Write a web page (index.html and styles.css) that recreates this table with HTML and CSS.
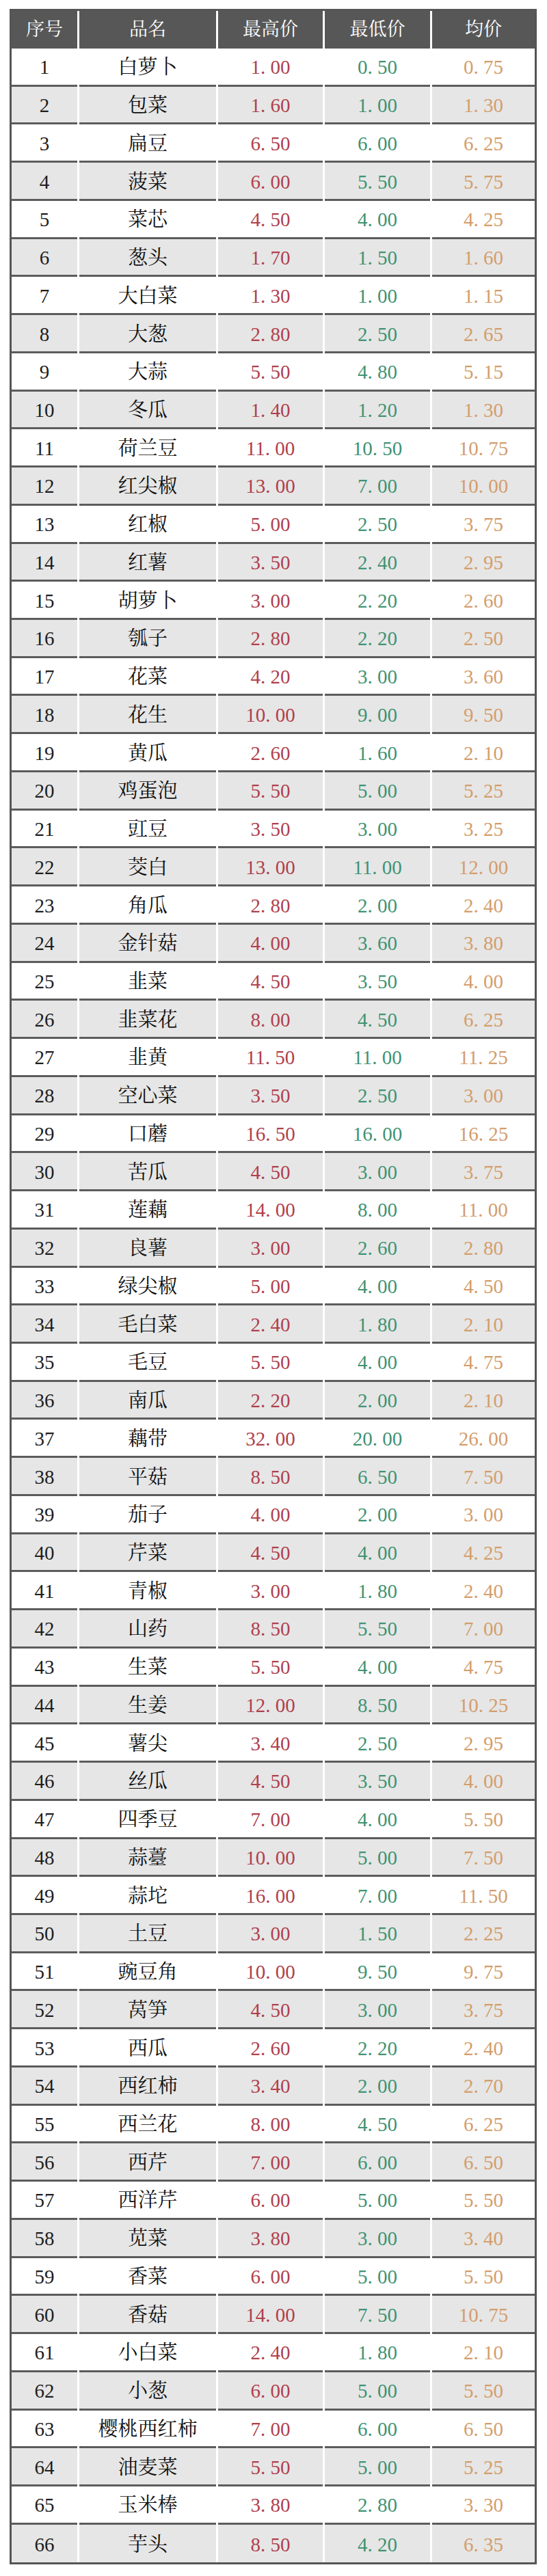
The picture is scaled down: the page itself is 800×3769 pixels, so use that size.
FILE: index.html
```html
<!DOCTYPE html>
<html lang="zh-CN">
<head>
<meta charset="utf-8">
<title>蔬菜价格表</title>
<link rel="stylesheet" href="styles.css">
</head>
<body>
<div class="table">
  <div class="row head"><div class="c">序号</div><div class="c">品名</div><div class="c">最高价</div><div class="c">最低价</div><div class="c">均价</div></div>
  <div class="row"><div class="c">1</div><div class="c nm">白萝卜</div><div class="c hi">1<span class="p">.</span>00</div><div class="c lo">0<span class="p">.</span>50</div><div class="c av">0<span class="p">.</span>75</div></div>
  <div class="row"><div class="c">2</div><div class="c nm">包菜</div><div class="c hi">1<span class="p">.</span>60</div><div class="c lo">1<span class="p">.</span>00</div><div class="c av">1<span class="p">.</span>30</div></div>
  <div class="row"><div class="c">3</div><div class="c nm">扁豆</div><div class="c hi">6<span class="p">.</span>50</div><div class="c lo">6<span class="p">.</span>00</div><div class="c av">6<span class="p">.</span>25</div></div>
  <div class="row"><div class="c">4</div><div class="c nm">菠菜</div><div class="c hi">6<span class="p">.</span>00</div><div class="c lo">5<span class="p">.</span>50</div><div class="c av">5<span class="p">.</span>75</div></div>
  <div class="row"><div class="c">5</div><div class="c nm">菜芯</div><div class="c hi">4<span class="p">.</span>50</div><div class="c lo">4<span class="p">.</span>00</div><div class="c av">4<span class="p">.</span>25</div></div>
  <div class="row"><div class="c">6</div><div class="c nm">葱头</div><div class="c hi">1<span class="p">.</span>70</div><div class="c lo">1<span class="p">.</span>50</div><div class="c av">1<span class="p">.</span>60</div></div>
  <div class="row"><div class="c">7</div><div class="c nm">大白菜</div><div class="c hi">1<span class="p">.</span>30</div><div class="c lo">1<span class="p">.</span>00</div><div class="c av">1<span class="p">.</span>15</div></div>
  <div class="row"><div class="c">8</div><div class="c nm">大葱</div><div class="c hi">2<span class="p">.</span>80</div><div class="c lo">2<span class="p">.</span>50</div><div class="c av">2<span class="p">.</span>65</div></div>
  <div class="row"><div class="c">9</div><div class="c nm">大蒜</div><div class="c hi">5<span class="p">.</span>50</div><div class="c lo">4<span class="p">.</span>80</div><div class="c av">5<span class="p">.</span>15</div></div>
  <div class="row"><div class="c">10</div><div class="c nm">冬瓜</div><div class="c hi">1<span class="p">.</span>40</div><div class="c lo">1<span class="p">.</span>20</div><div class="c av">1<span class="p">.</span>30</div></div>
  <div class="row"><div class="c">11</div><div class="c nm">荷兰豆</div><div class="c hi">11<span class="p">.</span>00</div><div class="c lo">10<span class="p">.</span>50</div><div class="c av">10<span class="p">.</span>75</div></div>
  <div class="row"><div class="c">12</div><div class="c nm">红尖椒</div><div class="c hi">13<span class="p">.</span>00</div><div class="c lo">7<span class="p">.</span>00</div><div class="c av">10<span class="p">.</span>00</div></div>
  <div class="row"><div class="c">13</div><div class="c nm">红椒</div><div class="c hi">5<span class="p">.</span>00</div><div class="c lo">2<span class="p">.</span>50</div><div class="c av">3<span class="p">.</span>75</div></div>
  <div class="row"><div class="c">14</div><div class="c nm">红薯</div><div class="c hi">3<span class="p">.</span>50</div><div class="c lo">2<span class="p">.</span>40</div><div class="c av">2<span class="p">.</span>95</div></div>
  <div class="row"><div class="c">15</div><div class="c nm">胡萝卜</div><div class="c hi">3<span class="p">.</span>00</div><div class="c lo">2<span class="p">.</span>20</div><div class="c av">2<span class="p">.</span>60</div></div>
  <div class="row"><div class="c">16</div><div class="c nm">瓠子</div><div class="c hi">2<span class="p">.</span>80</div><div class="c lo">2<span class="p">.</span>20</div><div class="c av">2<span class="p">.</span>50</div></div>
  <div class="row"><div class="c">17</div><div class="c nm">花菜</div><div class="c hi">4<span class="p">.</span>20</div><div class="c lo">3<span class="p">.</span>00</div><div class="c av">3<span class="p">.</span>60</div></div>
  <div class="row"><div class="c">18</div><div class="c nm">花生</div><div class="c hi">10<span class="p">.</span>00</div><div class="c lo">9<span class="p">.</span>00</div><div class="c av">9<span class="p">.</span>50</div></div>
  <div class="row"><div class="c">19</div><div class="c nm">黄瓜</div><div class="c hi">2<span class="p">.</span>60</div><div class="c lo">1<span class="p">.</span>60</div><div class="c av">2<span class="p">.</span>10</div></div>
  <div class="row"><div class="c">20</div><div class="c nm">鸡蛋泡</div><div class="c hi">5<span class="p">.</span>50</div><div class="c lo">5<span class="p">.</span>00</div><div class="c av">5<span class="p">.</span>25</div></div>
  <div class="row"><div class="c">21</div><div class="c nm">豇豆</div><div class="c hi">3<span class="p">.</span>50</div><div class="c lo">3<span class="p">.</span>00</div><div class="c av">3<span class="p">.</span>25</div></div>
  <div class="row"><div class="c">22</div><div class="c nm">茭白</div><div class="c hi">13<span class="p">.</span>00</div><div class="c lo">11<span class="p">.</span>00</div><div class="c av">12<span class="p">.</span>00</div></div>
  <div class="row"><div class="c">23</div><div class="c nm">角瓜</div><div class="c hi">2<span class="p">.</span>80</div><div class="c lo">2<span class="p">.</span>00</div><div class="c av">2<span class="p">.</span>40</div></div>
  <div class="row"><div class="c">24</div><div class="c nm">金针菇</div><div class="c hi">4<span class="p">.</span>00</div><div class="c lo">3<span class="p">.</span>60</div><div class="c av">3<span class="p">.</span>80</div></div>
  <div class="row"><div class="c">25</div><div class="c nm">韭菜</div><div class="c hi">4<span class="p">.</span>50</div><div class="c lo">3<span class="p">.</span>50</div><div class="c av">4<span class="p">.</span>00</div></div>
  <div class="row"><div class="c">26</div><div class="c nm">韭菜花</div><div class="c hi">8<span class="p">.</span>00</div><div class="c lo">4<span class="p">.</span>50</div><div class="c av">6<span class="p">.</span>25</div></div>
  <div class="row"><div class="c">27</div><div class="c nm">韭黄</div><div class="c hi">11<span class="p">.</span>50</div><div class="c lo">11<span class="p">.</span>00</div><div class="c av">11<span class="p">.</span>25</div></div>
  <div class="row"><div class="c">28</div><div class="c nm">空心菜</div><div class="c hi">3<span class="p">.</span>50</div><div class="c lo">2<span class="p">.</span>50</div><div class="c av">3<span class="p">.</span>00</div></div>
  <div class="row"><div class="c">29</div><div class="c nm">口蘑</div><div class="c hi">16<span class="p">.</span>50</div><div class="c lo">16<span class="p">.</span>00</div><div class="c av">16<span class="p">.</span>25</div></div>
  <div class="row"><div class="c">30</div><div class="c nm">苦瓜</div><div class="c hi">4<span class="p">.</span>50</div><div class="c lo">3<span class="p">.</span>00</div><div class="c av">3<span class="p">.</span>75</div></div>
  <div class="row"><div class="c">31</div><div class="c nm">莲藕</div><div class="c hi">14<span class="p">.</span>00</div><div class="c lo">8<span class="p">.</span>00</div><div class="c av">11<span class="p">.</span>00</div></div>
  <div class="row"><div class="c">32</div><div class="c nm">良薯</div><div class="c hi">3<span class="p">.</span>00</div><div class="c lo">2<span class="p">.</span>60</div><div class="c av">2<span class="p">.</span>80</div></div>
  <div class="row"><div class="c">33</div><div class="c nm">绿尖椒</div><div class="c hi">5<span class="p">.</span>00</div><div class="c lo">4<span class="p">.</span>00</div><div class="c av">4<span class="p">.</span>50</div></div>
  <div class="row"><div class="c">34</div><div class="c nm">毛白菜</div><div class="c hi">2<span class="p">.</span>40</div><div class="c lo">1<span class="p">.</span>80</div><div class="c av">2<span class="p">.</span>10</div></div>
  <div class="row"><div class="c">35</div><div class="c nm">毛豆</div><div class="c hi">5<span class="p">.</span>50</div><div class="c lo">4<span class="p">.</span>00</div><div class="c av">4<span class="p">.</span>75</div></div>
  <div class="row"><div class="c">36</div><div class="c nm">南瓜</div><div class="c hi">2<span class="p">.</span>20</div><div class="c lo">2<span class="p">.</span>00</div><div class="c av">2<span class="p">.</span>10</div></div>
  <div class="row"><div class="c">37</div><div class="c nm">藕带</div><div class="c hi">32<span class="p">.</span>00</div><div class="c lo">20<span class="p">.</span>00</div><div class="c av">26<span class="p">.</span>00</div></div>
  <div class="row"><div class="c">38</div><div class="c nm">平菇</div><div class="c hi">8<span class="p">.</span>50</div><div class="c lo">6<span class="p">.</span>50</div><div class="c av">7<span class="p">.</span>50</div></div>
  <div class="row"><div class="c">39</div><div class="c nm">茄子</div><div class="c hi">4<span class="p">.</span>00</div><div class="c lo">2<span class="p">.</span>00</div><div class="c av">3<span class="p">.</span>00</div></div>
  <div class="row"><div class="c">40</div><div class="c nm">芹菜</div><div class="c hi">4<span class="p">.</span>50</div><div class="c lo">4<span class="p">.</span>00</div><div class="c av">4<span class="p">.</span>25</div></div>
  <div class="row"><div class="c">41</div><div class="c nm">青椒</div><div class="c hi">3<span class="p">.</span>00</div><div class="c lo">1<span class="p">.</span>80</div><div class="c av">2<span class="p">.</span>40</div></div>
  <div class="row"><div class="c">42</div><div class="c nm">山药</div><div class="c hi">8<span class="p">.</span>50</div><div class="c lo">5<span class="p">.</span>50</div><div class="c av">7<span class="p">.</span>00</div></div>
  <div class="row"><div class="c">43</div><div class="c nm">生菜</div><div class="c hi">5<span class="p">.</span>50</div><div class="c lo">4<span class="p">.</span>00</div><div class="c av">4<span class="p">.</span>75</div></div>
  <div class="row"><div class="c">44</div><div class="c nm">生姜</div><div class="c hi">12<span class="p">.</span>00</div><div class="c lo">8<span class="p">.</span>50</div><div class="c av">10<span class="p">.</span>25</div></div>
  <div class="row"><div class="c">45</div><div class="c nm">薯尖</div><div class="c hi">3<span class="p">.</span>40</div><div class="c lo">2<span class="p">.</span>50</div><div class="c av">2<span class="p">.</span>95</div></div>
  <div class="row"><div class="c">46</div><div class="c nm">丝瓜</div><div class="c hi">4<span class="p">.</span>50</div><div class="c lo">3<span class="p">.</span>50</div><div class="c av">4<span class="p">.</span>00</div></div>
  <div class="row"><div class="c">47</div><div class="c nm">四季豆</div><div class="c hi">7<span class="p">.</span>00</div><div class="c lo">4<span class="p">.</span>00</div><div class="c av">5<span class="p">.</span>50</div></div>
  <div class="row"><div class="c">48</div><div class="c nm">蒜薹</div><div class="c hi">10<span class="p">.</span>00</div><div class="c lo">5<span class="p">.</span>00</div><div class="c av">7<span class="p">.</span>50</div></div>
  <div class="row"><div class="c">49</div><div class="c nm">蒜坨</div><div class="c hi">16<span class="p">.</span>00</div><div class="c lo">7<span class="p">.</span>00</div><div class="c av">11<span class="p">.</span>50</div></div>
  <div class="row"><div class="c">50</div><div class="c nm">土豆</div><div class="c hi">3<span class="p">.</span>00</div><div class="c lo">1<span class="p">.</span>50</div><div class="c av">2<span class="p">.</span>25</div></div>
  <div class="row"><div class="c">51</div><div class="c nm">豌豆角</div><div class="c hi">10<span class="p">.</span>00</div><div class="c lo">9<span class="p">.</span>50</div><div class="c av">9<span class="p">.</span>75</div></div>
  <div class="row"><div class="c">52</div><div class="c nm">莴笋</div><div class="c hi">4<span class="p">.</span>50</div><div class="c lo">3<span class="p">.</span>00</div><div class="c av">3<span class="p">.</span>75</div></div>
  <div class="row"><div class="c">53</div><div class="c nm">西瓜</div><div class="c hi">2<span class="p">.</span>60</div><div class="c lo">2<span class="p">.</span>20</div><div class="c av">2<span class="p">.</span>40</div></div>
  <div class="row"><div class="c">54</div><div class="c nm">西红柿</div><div class="c hi">3<span class="p">.</span>40</div><div class="c lo">2<span class="p">.</span>00</div><div class="c av">2<span class="p">.</span>70</div></div>
  <div class="row"><div class="c">55</div><div class="c nm">西兰花</div><div class="c hi">8<span class="p">.</span>00</div><div class="c lo">4<span class="p">.</span>50</div><div class="c av">6<span class="p">.</span>25</div></div>
  <div class="row"><div class="c">56</div><div class="c nm">西芹</div><div class="c hi">7<span class="p">.</span>00</div><div class="c lo">6<span class="p">.</span>00</div><div class="c av">6<span class="p">.</span>50</div></div>
  <div class="row"><div class="c">57</div><div class="c nm">西洋芹</div><div class="c hi">6<span class="p">.</span>00</div><div class="c lo">5<span class="p">.</span>00</div><div class="c av">5<span class="p">.</span>50</div></div>
  <div class="row"><div class="c">58</div><div class="c nm">苋菜</div><div class="c hi">3<span class="p">.</span>80</div><div class="c lo">3<span class="p">.</span>00</div><div class="c av">3<span class="p">.</span>40</div></div>
  <div class="row"><div class="c">59</div><div class="c nm">香菜</div><div class="c hi">6<span class="p">.</span>00</div><div class="c lo">5<span class="p">.</span>00</div><div class="c av">5<span class="p">.</span>50</div></div>
  <div class="row"><div class="c">60</div><div class="c nm">香菇</div><div class="c hi">14<span class="p">.</span>00</div><div class="c lo">7<span class="p">.</span>50</div><div class="c av">10<span class="p">.</span>75</div></div>
  <div class="row"><div class="c">61</div><div class="c nm">小白菜</div><div class="c hi">2<span class="p">.</span>40</div><div class="c lo">1<span class="p">.</span>80</div><div class="c av">2<span class="p">.</span>10</div></div>
  <div class="row"><div class="c">62</div><div class="c nm">小葱</div><div class="c hi">6<span class="p">.</span>00</div><div class="c lo">5<span class="p">.</span>00</div><div class="c av">5<span class="p">.</span>50</div></div>
  <div class="row"><div class="c">63</div><div class="c nm">樱桃西红柿</div><div class="c hi">7<span class="p">.</span>00</div><div class="c lo">6<span class="p">.</span>00</div><div class="c av">6<span class="p">.</span>50</div></div>
  <div class="row"><div class="c">64</div><div class="c nm">油麦菜</div><div class="c hi">5<span class="p">.</span>50</div><div class="c lo">5<span class="p">.</span>00</div><div class="c av">5<span class="p">.</span>25</div></div>
  <div class="row"><div class="c">65</div><div class="c nm">玉米棒</div><div class="c hi">3<span class="p">.</span>80</div><div class="c lo">2<span class="p">.</span>80</div><div class="c av">3<span class="p">.</span>30</div></div>
  <div class="row"><div class="c">66</div><div class="c nm">芋头</div><div class="c hi">8<span class="p">.</span>50</div><div class="c lo">4<span class="p">.</span>20</div><div class="c av">6<span class="p">.</span>35</div></div>
</div>
</body>
</html>
```
FILE: styles.css
```css
html, body {
  margin: 0;
  padding: 0;
  background: #ffffff;
}

body {
  font-family: "Liberation Serif", "Noto Serif CJK SC", "Noto Sans CJK SC", serif;
  color: #1e1e1e;
}

.table {
  margin: 13px 0 0 14px;
  width: 765px;
  border: 3px solid #555555;
  background: #ffffff;
}

.row {
  display: grid;
  grid-template-columns: 96px 200px 153px 154px 150px;
  column-gap: 3px;
  height: 55.74px;
}

.row .c {
  box-sizing: border-box;
  display: flex;
  align-items: center;
  justify-content: center;
  padding-top: 3px;
  border-bottom: 3px solid #5c5c5c;
  font-size: 29px;
  line-height: 1;
  white-space: nowrap;
}

.row:nth-child(odd) .c {
  background: #e6e6e6;
}

.row.head {
  height: 55px;
}

.row.head .c {
  background: #575757;
  color: #ffffff;
  border-bottom: 0;
  font-size: 27px;
  padding-top: 0;
}

.row:last-child .c {
  border-bottom: 0;
}

.nm {
  color: #111111;
}

.hi {
  color: #b0404c;
}

.lo {
  color: #3f9373;
}

.av {
  color: #d49d6c;
}

.p {
  display: inline-block;
  width: 0.5em;
  text-align: left;
}
```
